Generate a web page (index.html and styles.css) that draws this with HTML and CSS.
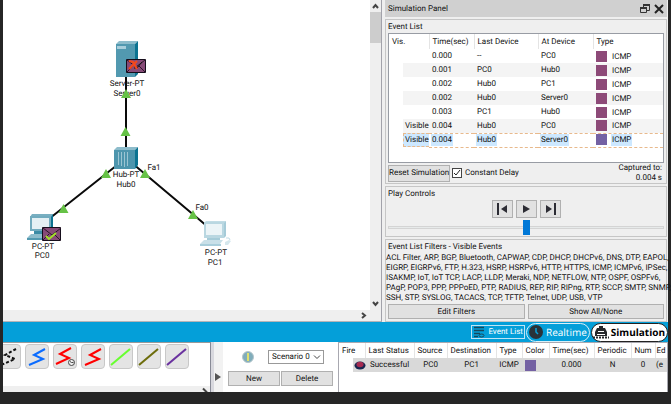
FILE: index.html
```html
<!DOCTYPE html>
<html lang="en">
<head>
<meta charset="utf-8">
<title>Simulation</title>
<link rel="stylesheet" href="styles.css">
</head>
<body>
<div class="app">
  <div class="upper">
    <main class="workspace">
      <div class="canvas">
        <svg class="topology" width="367" height="310" viewBox="3 0 367 310" role="img" aria-label="Network topology">
          <g class="wire">
            <path d="M126 158V76M126 158L40 226M126 158L214 232"/>
          </g>
          <g class="server">
            <path fill="#8dbccb" d="M116 44l3-3h19l-3 3z"/>
            <path fill="#0c7391" d="M135 44l3-3v33l-3 3z"/>
            <path fill="#5299b0" d="M116 44h19v33h-19z"/>
            <path fill="#a9cedb" d="M117 46h9v3h-9z"/>
          </g>
          <g class="hub">
            <path fill="#8dbccb" d="M114 150l3-3h21l-3 3z"/>
            <path fill="#0c7391" d="M135 150l3-3v18l-3 4z"/>
            <path fill="#4d95ad" d="M114 150h21v19h-21z"/>
            <path stroke="#9cc5d3" d="M118.500 152v13M121.500 152v14M124.500 152v15M127.500 152v14"/>
          </g>
          <g class="pc">
            <path fill="#78afc1" d="M30 217l2-3h21l-1 3z"/>
            <path fill="#0c7391" d="M51 217l2-3v16l-2 2z"/>
            <path fill="#71abbe" d="M30 216h21v15H30z"/>
            <path fill="#e4f0f4" d="M32 218h17v11H32z"/>
            <path fill="#3b8ba5" d="M34 231h13v3H34z"/>
            <path fill="#8dbccb" d="M31 234h18l-3 4H27z"/>
            <path fill="#5299b0" d="M27 238h20v2H27z"/>
          </g>
          <g class="pc">
            <path fill="#c1dce5" d="M204 223l2-2h20l-1 2z"/>
            <path fill="#a5cbd8" d="M224 223l2-2v15l-2 2z"/>
            <path fill="#b9d7e1" d="M204 222h20v16h-20z"/>
            <path fill="#ebf4f7" d="M206 224h16v11h-16z"/>
            <path fill="#a5cbd8" d="M207 238h13v2h-13z"/>
            <path fill="#c9e0e8" d="M204 240h19l-3 4h-20z"/>
            <path fill="#a9cedb" d="M200 244h21v2h-21z"/>
            <path fill="#d5e7ed" d="M225 242l4-2 2 1-3 4h-3z"/>
            <path fill="none" stroke="#c1dce5" d="M226 238q4-1 4 2"/>
          </g>
          <path class="wire" d="M126 77V90"/>
          <g class="label">
            <text x="127" y="86">Server-PT</text><text x="127" y="96">Server0</text>
            <text x="126" y="177">Hub-PT</text><text x="126" y="187">Hub0</text>
            <text x="154" y="170">Fa1</text><text x="202" y="210">Fa0</text>
            <text x="43" y="249">PC-PT</text><text x="42" y="258">PC0</text>
            <text x="216" y="255">PC-PT</text><text x="215" y="265">PC1</text>
          </g>
          <path fill="#66c246" d="M126 89l5 9h-10zM125.500 127l5 9h-10zM106 169l5 9h-10zM145 169l5 9h-10zM63.500 204l5 9h-10zM193 210l5 9h-10z"/>
          <g>
            <path fill="#874a78" stroke="#160e1c" d="M126.500 59.500h19v13h-19z"/>
            <path fill="none" stroke="#2a1628" d="M127 60l9 7 9-7M127 72l6-6M145 72l-6-6"/>
            <path fill="none" stroke="#111" d="M134 68l3 0 5-6"/>
            <path fill="none" stroke="#f5481b" stroke-width="2.200" d="M129 61l4 1 4 7M137 61l-8 8"/>
          </g>
          <g>
            <path fill="#874a78" stroke="#160e1c" d="M42.500 227.500h18v13h-18z"/>
            <path fill="none" stroke="#2a1628" d="M43 228l9 7 9-7M43 240l6-6M60 240l-6-6"/>
            <path fill="none" stroke="#a3e028" stroke-width="2" d="M46 236l3 3 7-6"/>
          </g>
        </svg>
      </div>
      <div class="vscroll">
        <svg width="11" height="12" viewBox="0 0 11 12"><path class="chev" d="M3 8l2.500-3L8 8"/></svg>
        <div class="thumb"></div>
        <svg class="end" width="11" height="12" viewBox="0 0 11 12"><path class="chev" d="M3 4l2.500 3L8 4"/></svg>
      </div>
      <div class="hscroll">
        <svg width="11" height="11" viewBox="0 0 11 11"><path class="chev" d="M4 3l3 2.500L4 8"/></svg>
      </div>
    </main>

    <aside class="panel">
      <header class="panel-title">
        <span>Simulation Panel</span>
        <button class="icon-button" aria-label="Float panel"><svg width="10" height="10" viewBox="0 0 10 10"><path fill="none" stroke="#333" d="M3.500 4V1.500h6v5H7M.5 4.500h6v4h-6z"/><path fill="#333" d="M3 0h7v2H3zM0 3h7v2H0z"/></svg></button>
        <button class="icon-button" aria-label="Close panel"><svg width="10" height="10" viewBox="0 0 10 10"><path stroke="#222" stroke-width="2" d="M1 1l8 8M9 1L1 9"/></svg></button>
      </header>

      <section class="group">
        <h2>Event List</h2>
        <div class="events">
          <table>
            <colgroup><col class="c-vis"><col class="c-time"><col class="c-last"><col class="c-at"><col></colgroup>
            <thead><tr><th>Vis.</th><th>Time(sec)</th><th>Last Device</th><th>At Device</th><th>Type</th></tr></thead>
            <tbody>
              <tr><td></td><td>0.000</td><td>--</td><td>PC0</td><td><i class="swatch"></i>ICMP</td></tr>
              <tr><td></td><td>0.001</td><td>PC0</td><td>Hub0</td><td><i class="swatch"></i>ICMP</td></tr>
              <tr><td></td><td>0.002</td><td>Hub0</td><td>PC1</td><td><i class="swatch"></i>ICMP</td></tr>
              <tr><td></td><td>0.002</td><td>Hub0</td><td>Server0</td><td><i class="swatch"></i>ICMP</td></tr>
              <tr><td></td><td>0.003</td><td>PC1</td><td>Hub0</td><td><i class="swatch"></i>ICMP</td></tr>
              <tr><td>Visible</td><td>0.004</td><td>Hub0</td><td>PC0</td><td><i class="swatch"></i>ICMP</td></tr>
              <tr class="selected"><td><span>Visible</span></td><td><span>0.004</span></td><td><span>Hub0</span></td><td><span>Server0</span></td><td><i class="swatch violet"></i><span>ICMP</span></td></tr>
            </tbody>
          </table>
        </div>
        <div class="capture">
          <button class="push">Reset Simulation</button>
          <label class="check"><input type="checkbox" checked><svg width="10" height="10" viewBox="0 0 10 10"><path fill="none" stroke="#222" d="M2 5l2 2 4-5"/></svg>Constant Delay</label>
          <p>Captured to:<br>0.004 s</p>
        </div>
      </section>

      <section class="group">
        <h2>Play Controls</h2>
        <div class="transport">
          <button class="push" aria-label="Back"><svg width="11" height="12" viewBox="0 0 11 12"><path fill="#2c2c34" d="M0 0h2v12H0zM10 2v8L4 6z"/></svg></button>
          <button class="push" aria-label="Play"><svg width="11" height="12" viewBox="0 0 11 12"><path fill="#2c2c34" d="M2 2v8l7-4z"/></svg></button>
          <button class="push" aria-label="Forward"><svg width="11" height="12" viewBox="0 0 11 12"><path fill="#2c2c34" d="M9 0h2v12H9zM1 2v8l6-4z"/></svg></button>
        </div>
        <input class="speed" type="range" min="0" max="100" value="50" aria-label="Play speed">
      </section>

      <section class="group grow">
        <h2>Event List Filters - Visible Events</h2>
        <p class="filters">ACL Filter, ARP, BGP, Bluetooth, CAPWAP, CDP, DHCP, DHCPv6, DNS, DTP, EAPOL,<br>EIGRP, EIGRPv6, FTP, H.323, HSRP, HSRPv6, HTTP, HTTPS, ICMP, ICMPv6, IPSec,<br>ISAKMP, IoT, IoT TCP, LACP, LLDP, Meraki, NDP, NETFLOW, NTP, OSPF, OSPFv6,<br>PAgP, POP3, PPP, PPPoED, PTP, RADIUS, REP, RIP, RIPng, RTP, SCCP, SMTP, SNMP,<br>SSH, STP, SYSLOG, TACACS, TCP, TFTP, Telnet, UDP, USB, VTP</p>
        <div class="pair">
          <button class="push">Edit Filters</button>
          <button class="push">Show All/None</button>
        </div>
      </section>
    </aside>
  </div>

  <nav class="modes">
    <button class="event-toggle"><svg width="12" height="12" viewBox="0 0 12 12"><path stroke="#17485c" stroke-width="1.500" d="M1 1.500h10M1 4.500h10M1 7.500h6M1 10.500h4"/><ellipse cx="8.500" cy="9.500" rx="2.500" ry="1.500" fill="none" stroke="#17485c"/></svg>Event List</button>
    <button class="mode"><svg width="16" height="16" viewBox="0 0 16 16"><circle cx="8" cy="8" r="7" fill="#293238"/><path fill="none" stroke="#08a0da" stroke-width="1.500" d="M8 4v4l2 2"/></svg>Realtime</button>
    <button class="mode active"><svg width="16" height="16" viewBox="0 0 16 16"><path fill="#25282b" d="M6 2h4v2H6zM4 4h8l2 4v4H2V8z"/><path fill="#fff" d="M5 7h6v1H5zM4 10h8v1H4z"/><path stroke="#25282b" stroke-width="2" stroke-dasharray="2 1" d="M0 13.500h16"/></svg>Simulation</button>
  </nav>

  <div class="lower">
    <section class="cables">
      <div class="cable-row">
        <button class="cable" aria-label="Cross-over"><svg viewBox="0 0 22 22"><path stroke="#111" stroke-dasharray="3 2" d="M18 3L7 9l10 4-14 6"/></svg></button>
        <button class="cable" aria-label="Phone"><svg viewBox="0 0 22 22"><path stroke="#0b6cff" d="M19 3L8 9l9 4-14 6"/></svg></button>
        <button class="cable" aria-label="Serial DCE"><svg viewBox="0 0 22 22"><path stroke="#f00" d="M17 2L6 8l9 4-13 6"/><circle class="dial" cx="17.500" cy="16.500" r="3"/><path class="hand" d="M16 15.500l1.500 1h2"/></svg></button>
        <button class="cable" aria-label="Serial DTE"><svg viewBox="0 0 22 22"><path stroke="#f00" d="M19 3L8 9l9 4-14 6"/></svg></button>
        <button class="cable" aria-label="Octal"><svg viewBox="0 0 22 22"><path stroke="#68ff30" d="M1 19L20 3"/></svg></button>
        <button class="cable" aria-label="Custom"><svg viewBox="0 0 22 22"><path stroke="#6d6d0c" d="M1 19L20 3"/></svg></button>
        <button class="cable" aria-label="USB"><svg viewBox="0 0 22 22"><path stroke="#6a329f" d="M1 19L20 3"/></svg></button>
      </div>
      <div class="cable-scroll"><svg width="11" height="6" viewBox="0 0 11 6"><path class="chev" d="M4 2.500l4 4"/></svg></div>
    </section>
    <button class="collapse" aria-label="Collapse"><svg width="6" height="8" viewBox="0 0 6 8"><path fill="#555" d="M0 0v8l6-4z"/></svg></button>
    <section class="scenario">
      <div class="scenario-top">
        <svg width="12" height="12" viewBox="0 0 12 12"><circle cx="6" cy="6" r="5.500" fill="#80adbb" stroke="#b4c5ca"/><path fill="#dfe070" d="M5 2h2v8H5z"/></svg>
        <span class="select"><select aria-label="Scenario"><option>Scenario 0</option></select><svg width="8" height="6" viewBox="0 0 8 6"><path class="chev thin" d="M1 1.500l3 3 3-3"/></svg></span>
      </div>
      <div class="pair"><button class="push">New</button><button class="push">Delete</button></div>
    </section>
    <section class="pdu">
      <table>
        <colgroup><col class="p-fire"><col class="p-status"><col class="p-source"><col class="p-dest"><col class="p-type"><col class="p-color"><col class="p-time"><col class="p-periodic"><col class="p-num"><col></colgroup>
        <thead><tr><th>Fire</th><th>Last Status</th><th>Source</th><th>Destination</th><th>Type</th><th>Color</th><th>Time(sec)</th><th>Periodic</th><th>Num</th><th>Ed</th></tr></thead>
        <tbody><tr><td class="fire"><svg width="12" height="10" viewBox="0 0 12 10"><ellipse cx="6" cy="5.500" rx="5.500" ry="4" fill="#18264f"/><ellipse cx="6" cy="4.500" rx="3.500" ry="2.800" fill="#a52a50"/></svg></td><td>Successful</td><td>PC0</td><td>PC1</td><td>ICMP</td><td class="color"><i class="swatch violet"></i></td><td>0.000</td><td>N</td><td>0</td><td class="edit">(e</td></tr></tbody>
      </table>
    </section>
  </div>
</div>
</body>
</html>
```
FILE: styles.css
```css
* { box-sizing: border-box; }

body {
  margin: 0;
  background: #262626;
  color: #111;
  font: 8px/10px Roboto, "Liberation Sans", sans-serif;
  text-rendering: geometricPrecision;
}

button, select, input { margin: 0; font: inherit; color: inherit; text-rendering: inherit; }
h2, p { margin: 0; font: inherit; }
svg { display: block; flex: none; }
table { width: 100%; border-collapse: collapse; table-layout: fixed; }
th { font-weight: normal; text-align: left; }
td, th { padding: 0; white-space: nowrap; }

.app {
  display: flex;
  flex-direction: column;
  min-height: 100vh;
  padding: 0 3px 12px;
}

.upper { display: flex; flex: 1; background: #efefef; }

/* workspace */
.workspace {
  flex: 1;
  min-width: 0;
  display: grid;
  grid-template: 1fr 11px / 1fr 11px;
  border-right: 1px solid #a2a2aa;
  border-bottom: 1px solid #b4b4b8;
}
.canvas { background: #fff; overflow: hidden; }
.wire { fill: none; stroke: #0a0a0a; stroke-width: 2; }
.label { text-anchor: middle; fill: #111; }
.chev { fill: none; stroke: #444; stroke-width: 2; }
.thin { stroke-width: 1; }
.vscroll { display: flex; flex-direction: column; }
.thumb { height: 31px; background: #cdcdcd; }
.end { margin-top: auto; }
.hscroll { grid-column: 1 / 3; padding-right: 12px; display: flex; justify-content: flex-end; align-items: center; }

/* simulation panel */
.panel {
  width: 286px;
  padding: 0 1px 0 3px;
  display: flex;
  flex-direction: column;
  gap: 2px;
}
.panel-title {
  display: flex;
  align-items: center;
  gap: 4px;
  height: 17px;
  padding: 0 3px;
  background: #d0d0d0;
}
.panel-title span { flex: 1; }
.icon-button { padding: 0; border: 0; background: none; }
.group {
  padding: 1px 2px 0;
  border: 1px solid #c6c6c6;
}
.group h2 { height: 12px; line-height: 12px; }
.grow { flex: 1; }

.events {
  height: 130px;
  background: #fff;
  border: 1px solid #989ca4;
}
.events tr { height: 14px; }
.events thead tr { height: 15px; }
.events th { border-right: 1px solid #e4e4e4; padding-left: 3px; }
.events th:last-child { border-right: 0; }
.events td { padding-left: 3px; }
.events td:first-child { padding-left: 16px; }
.events tbody tr:nth-child(even) td:not(:first-child) { background: #f4f4f4; }
.events tbody tr:nth-child(even) td:first-child { background: linear-gradient(to right, #fff 14px, #f4f4f4 14px); }
.events .selected span { display: inline-block; height: 12px; line-height: 12px; padding: 0 1px; margin: 0 -1px; background: #cde8ff; }
.events .selected td:not(:first-child) { border-top: 1px dashed #e8b98c; border-bottom: 1px dashed #e8b98c; }
.events .selected td:first-child span { display: block; height: 14px; margin-left: -2px; margin-right: 0; border: 1px dashed #e8b98c; border-right: 0; }
.c-vis { width: 40px; }
.c-time { width: 45px; }
.c-last { width: 64px; }
.c-at { width: 55px; }
.swatch {
  display: inline-block;
  width: 11px;
  height: 11px;
  margin-right: 5px;
  vertical-align: middle;
  background: #8d4a78;
}
.violet { background: #7461a3; }

.push {
  padding: 0 2px;
  border: 1px solid #b0b0b0;
  background: #e1e1e1;
  text-align: center;
  white-space: nowrap;
}
.capture { display: flex; align-items: center; gap: 2px; }
.capture .push { width: 62px; height: 17px; padding: 0; }
.capture p { margin-left: auto; padding-right: 2px; text-align: right; }
.check { display: flex; align-items: center; gap: 3px; position: relative; }
.check input { appearance: none; width: 10px; height: 10px; border: 1px solid #444; background: #fff; }
.check svg { position: absolute; left: 0; }

.transport { display: flex; justify-content: center; gap: 3px; }
.transport .push { width: 21px; height: 18px; display: grid; place-items: center; padding: 0; }
.speed { appearance: none; display: block; width: 100%; height: 18px; background: none; }
.speed::-webkit-slider-runnable-track { height: 3px; border: 1px solid #d4d4d4; background: #e7eaea; }
.speed::-webkit-slider-thumb { appearance: none; width: 7px; height: 15px; margin-top: -7px; background: #0078d7; }

.filters { margin: 0 -2px; white-space: nowrap; padding-bottom: 1px; }
.pair { display: flex; gap: 3px; }
.pair .push { flex: 1; height: 15px; }

/* mode bar */
.modes {
  display: flex;
  justify-content: flex-end;
  align-items: center;
  gap: 1px;
  height: 20px;
  background: #049fd9;
}
.event-toggle {
  display: flex;
  align-items: center;
  gap: 3px;
  height: 14px;
  padding: 0 1px;
  border: 1px solid #bfe5f5;
  background: none;
  color: #fff;
}
.mode {
  display: flex;
  align-items: center;
  gap: 2px;
  height: 19px;
  padding: 0 2px 0 1px;
  border: 1px solid #d9f0f9;
  border-radius: 10px;
  background: none;
  color: #fff;
  font: 10px/16px "Open Sans", sans-serif;
}
.active { background: #fff; border-color: #222; color: #000; font-weight: bold; }

/* bottom strip */
.lower { display: flex; height: 50px; background: #fff; overflow: hidden; }
.cables {
  width: 208px;
  display: flex;
  flex-direction: column;
  justify-content: space-between;
  border-top: 1px solid #999;
  border-right: 1px solid #888a96;
  overflow: hidden;
}
.cable-row { display: flex; gap: 4px; margin: 1px 0 0 -6px; }
.cable {
  width: 24px;
  height: 25px;
  flex: none;
  padding: 0;
  border: 1px solid #c8c8c8;
  border-radius: 4px;
  background: #e4e4e4;
}
.cable svg { width: 22px; height: 22px; fill: none; stroke-width: 2; }
.cable .dial, .cable .hand { stroke: #444; stroke-width: 1; }
.cable .dial { fill: #eee; }
.cable-scroll { height: 6px; background: #efefef; display: flex; justify-content: flex-end; }
.collapse {
  width: 12px;
  padding: 20px 0 0 1px;
  border: 0;
  border-left: 3px solid #d8d8de;
  background: #f2f2f2;
}
.scenario { width: 115px; padding: 8px 5px 0; }
.scenario-top { display: flex; align-items: center; gap: 14px; height: 14px; margin-bottom: 7px; padding-left: 14px; }
.scenario .pair { gap: 1px; }
.select { position: relative; width: 56px; }
.select select { appearance: none; display: block; width: 100%; height: 14px; padding: 0 3px; border: 1px solid #999; border-radius: 0; background: #fff; }
.select svg { position: absolute; right: 3px; top: 4px; }

.pdu { flex: 1; min-width: 0; overflow: hidden; border: solid #a8a8b0; border-width: 1px 1px 0 1px; }
.pdu tr { height: 14px; }
.pdu thead tr { height: 15px; }
.pdu th { border-right: 1px solid #e4e4e4; padding-left: 3px; }
.pdu td { background: #d9d9d9; text-align: center; }
.pdu th:last-child, .pdu .edit { text-align: left; padding-left: 1px; border-right: 0; }
.pdu .fire { background: linear-gradient(to right, #fff 14px, #d9d9d9 14px); }
.fire svg { margin-left: 15px; }
.pdu .color { text-align: left; padding-left: 3px; }
.color .swatch { display: block; }
.p-fire { width: 26px; }
.p-status { width: 49px; }
.p-source { width: 33px; }
.p-dest { width: 49px; }
.p-type { width: 26px; }
.p-color { width: 27px; }
.p-time { width: 45px; }
.p-periodic { width: 37px; }
.p-num { width: 24px; }
```
